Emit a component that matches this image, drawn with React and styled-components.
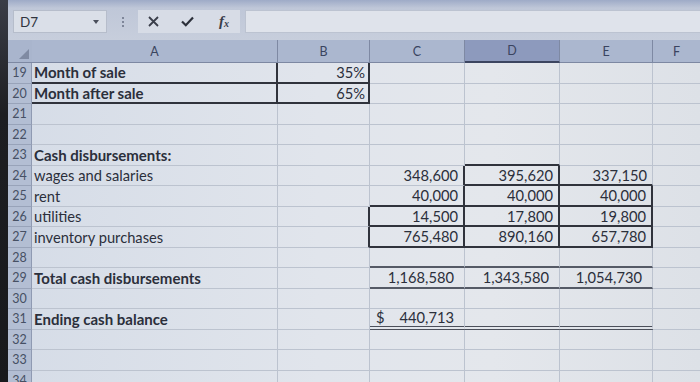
import React from "react";
import styled, { createGlobalStyle } from "styled-components";

const GlobalStyle = createGlobalStyle`
  html, body {
    margin: 0;
    padding: 0;
    width: 700px;
    height: 382px;
    overflow: hidden;
    background: #1f2024;
  }
  * {
    box-sizing: border-box;
  }
`;

const COLS = ["A", "B", "C", "D", "E", "F"];
const WIDTHS = [246, 92, 95, 95, 93];

// rows 19..34, values per column index
const ROWS = [
  { n: 19, cells: { 0: "Month of sale", 1: "35%" }, bold: true },
  { n: 20, cells: { 0: "Month after sale", 1: "65%" }, bold: true },
  { n: 21, cells: {} },
  { n: 22, cells: {} },
  { n: 23, cells: { 0: "Cash disbursements:" }, bold: true },
  { n: 24, cells: { 0: "wages and salaries", 2: "348,600", 3: "395,620", 4: "337,150" } },
  { n: 25, cells: { 0: "rent", 2: "40,000", 3: "40,000", 4: "40,000" } },
  { n: 26, cells: { 0: "utilities", 2: "14,500", 3: "17,800", 4: "19,800" } },
  { n: 27, cells: { 0: "inventory purchases", 2: "765,480", 3: "890,160", 4: "657,780" } },
  { n: 28, cells: {} },
  {
    n: 29,
    cells: { 0: "Total cash disbursements", 2: "1,168,580", 3: "1,343,580", 4: "1,054,730" },
    bold: true,
    wide: true,
  },
  { n: 30, cells: {} },
  { n: 31, cells: { 0: "Ending cash balance", 2: "440,713" }, bold: true, dollar: true },
  { n: 32, cells: {} },
  { n: 33, cells: {} },
  { n: 34, cells: {} },
];

// border map: key "row-col-side" -> kind
const edges = {};
const mark = (r, c, side, kind = "dark") => {
  if (c < 0 || r < 19) return;
  edges[`${r}-${c}-${side}`] = kind;
};
const box = (r, c) => {
  mark(r, c, "b");
  mark(r, c, "r");
  mark(r, c - 1, "r");
  mark(r - 1, c, "b");
};
[
  [19, 0], [19, 1], [20, 0], [20, 1],
  [24, 3], [25, 3], [25, 4],
  [26, 2], [26, 3], [26, 4],
  [27, 2], [27, 3], [27, 4],
].forEach(([r, c]) => box(r, c));
[2, 3, 4].forEach((c) => {
  mark(28, c, "b", "line");
  mark(29, c, "b", "line");
  mark(31, c, "b", "double");
});

const borderFor = (kind) => {
  if (kind === "dark") return "2px solid #30333c";
  if (kind === "line") return "2px solid #555a66";
  if (kind === "double") return "4px double #4b4f5a";
  return "1px solid #bcc3cf";
};

const App = () => {
  return (
    <>
      <GlobalStyle />
      <Page>
        <Bezel />
        <Main>
          <Toolbar>
            <NameBox>
              <NameText>D7</NameText>
              <Caret />
            </NameBox>
            <Grip>
              <span />
              <span />
              <span />
            </Grip>
            <ActionGroup>
              <ActionIcon $gap={10}>
                <svg width="11" height="11" viewBox="0 0 11 11">
                  <path d="M1 1 L10 10 M10 1 L1 10" stroke="#3a3e4a" strokeWidth="1.8" />
                </svg>
              </ActionIcon>
              <ActionIcon $gap={22}>
                <svg width="13" height="11" viewBox="0 0 13 11">
                  <path d="M1 5.5 L4.8 9.2 L12 1.5" stroke="#2c303a" strokeWidth="2.2" fill="none" />
                </svg>
              </ActionIcon>
              <Fx>
                f<sub>x</sub>
              </Fx>
            </ActionGroup>
            <FormulaInput />
          </Toolbar>

          <Sheet>
            <Corner>
              <CornerMark />
            </Corner>
            {COLS.map((c, i) => (
              <ColHead key={c} $selected={c === "D"} $last={i === COLS.length - 1}>
                {c}
              </ColHead>
            ))}

            {ROWS.map((row) => (
              <React.Fragment key={row.n}>
                <RowHead>{row.n}</RowHead>
                {COLS.map((c, ci) => {
                  const value = row.cells[ci];
                  const numeric = ci > 0;
                  return (
                    <Cell
                      key={c}
                      $numeric={numeric}
                      $bold={row.bold && ci === 0}
                      $pad={row.wide || row.dollar ? 10 : ci === 1 ? 3 : 5}
                      $right={borderFor(edges[`${row.n}-${ci}-r`])}
                      $bottom={borderFor(edges[`${row.n}-${ci}-b`])}
                      $last={ci === COLS.length - 1}
                    >
                      {row.dollar && ci === 2 && <Dollar>$</Dollar>}
                      {value}
                    </Cell>
                  );
                })}
              </React.Fragment>
            ))}
          </Sheet>
        </Main>
      </Page>
    </>
  );
};

export default App;

const Page = styled.div`
  display: flex;
  width: 700px;
  height: 382px;
  overflow: hidden;
  font-family: Lato, "Liberation Sans", sans-serif;
  color: #2b2f3b;
`;

const Bezel = styled.div`
  width: 8px;
  flex-shrink: 0;
  background: linear-gradient(to bottom, #3a3d47 0%, #1d1e22 30%, #18191c 100%);
`;

const Main = styled.div`
  flex: 1;
  display: flex;
  flex-direction: column;
  min-width: 0;
  overflow: hidden;
`;

const Toolbar = styled.div`
  height: 40px;
  flex-shrink: 0;
  display: flex;
  align-items: flex-start;
  padding: 10px 0 0 5px;
  background: linear-gradient(to bottom, #9eabc7 0px, #bfc7d8 8px, #c7cedc 100%);
`;

const NameBox = styled.div`
  width: 94px;
  height: 23px;
  display: flex;
  align-items: center;
  justify-content: space-between;
  padding: 0 7px 0 6px;
  background: #dadfe8;
  border: 1px solid #b6bdcb;
`;

const NameText = styled.span`
  font-size: 13.5px;
  color: #30343f;
`;

const Caret = styled.span`
  width: 0;
  height: 0;
  border-left: 3px solid transparent;
  border-right: 3px solid transparent;
  border-top: 4px solid #4a4f5c;
`;

const Grip = styled.div`
  width: 31px;
  height: 23px;
  display: flex;
  flex-direction: column;
  align-items: center;
  justify-content: center;
  gap: 2px;

  span {
    width: 2px;
    height: 2px;
    background: #7e8699;
  }
`;

const ActionGroup = styled.div`
  width: 102px;
  height: 23px;
  display: flex;
  align-items: center;
  background: #d7dce6;
`;

const ActionIcon = styled.span`
  display: flex;
  align-items: center;
  margin-left: ${(p) => p.$gap}px;
`;

const Fx = styled.span`
  margin-left: 25px;
  font-family: "Liberation Serif", serif;
  font-style: italic;
  font-weight: bold;
  font-size: 15px;
  line-height: 1;
  color: #3a3e4a;

  sub {
    font-size: 10px;
    vertical-align: -1px;
  }
`;

const FormulaInput = styled.div`
  flex: 1;
  height: 23px;
  margin-left: 5px;
  background: #dfe3eb;
  border: 1px solid #bcc3d1;
  border-right: none;
`;

const Sheet = styled.div`
  flex: 1;
  display: grid;
  grid-template-columns: 24px ${WIDTHS.map((w) => `${w}px`).join(" ")} 1fr;
  grid-template-rows: 23px repeat(16, 20.5px);
  background: linear-gradient(to right, #d5dce7 0%, #e1e5ec 45%, #e4e7ec 70%, #dde1e7 100%);
`;

const Corner = styled.div`
  position: relative;
  background: #a9b5cd;
  border-bottom: 1px solid #7d88a2;
`;

const CornerMark = styled.span`
  position: absolute;
  right: 3px;
  bottom: 3px;
  width: 0;
  height: 0;
  border-left: 10px solid transparent;
  border-bottom: 10px solid #7f8aa2;
`;

const ColHead = styled.div`
  display: flex;
  align-items: center;
  justify-content: center;
  font-size: 12.5px;
  color: #3a4460;
  background: ${(p) => (p.$selected ? "#8d9abd" : "#abb7cf")};
  border-right: ${(p) => (p.$last ? "none" : "1px solid #7e89a3")};
  border-bottom: ${(p) => (p.$selected ? "2px solid #3c4560" : "1px solid #7d88a2")};
`;

const RowHead = styled.div`
  display: flex;
  align-items: center;
  justify-content: center;
  font-size: 12.5px;
  color: #465064;
  background: #b3bed3;
  border-bottom: 1px solid #98a3b9;
  border-right: 1px solid #8f9ab2;
`;

const Cell = styled.div`
  display: flex;
  align-items: center;
  justify-content: ${(p) => (p.$numeric ? "flex-end" : "flex-start")};
  padding: ${(p) => (p.$numeric ? `0 ${p.$pad}px 0 0` : "0 0 0 2px")};
  font-size: ${(p) => (p.$bold ? "15px" : "14.7px")};
  font-weight: ${(p) => (p.$bold ? 700 : 400)};
  white-space: nowrap;
  position: relative;
  border-right: ${(p) => (p.$last ? "none" : p.$right)};
  border-bottom: ${(p) => p.$bottom};
`;

const Dollar = styled.span`
  position: absolute;
  left: 6px;
`;
